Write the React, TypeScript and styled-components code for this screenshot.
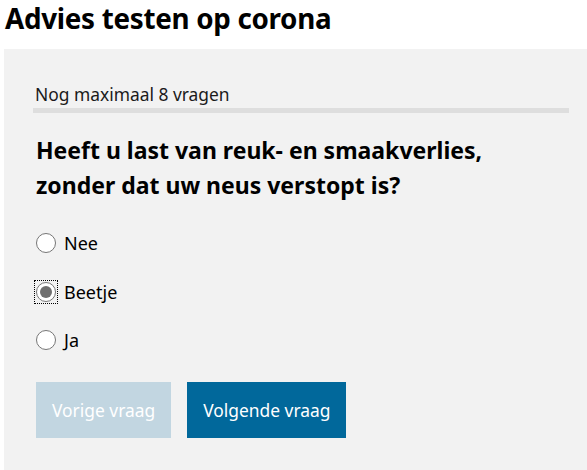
import styled, { createGlobalStyle } from 'styled-components';

const GlobalStyle = createGlobalStyle`
  body {
    margin: 0;
    overflow: hidden;
    background: #ffffff;
    font-family: 'Noto Sans', 'Open Sans', sans-serif;
    color: #000000;
  }
`;

const Page = styled.div`
  padding-left: 4px;
`;

const Title = styled.h1`
  margin: 0;
  padding: 1px 0 0 1px;
  height: 48px;
  font-size: 27.8px;
  line-height: 34px;
  font-weight: bold;
  letter-spacing: -0.3px;
`;

const Panel = styled.div`
  background: #f2f2f2;
  width: 536px;
  padding: 34px 29px 40px 29px;
  min-height: 400px;
`;

const ProgressLabel = styled.div`
  padding-left: 2px;
  font-size: 17.4px;
  line-height: 22px;
  color: #1a1a1a;
`;

const ProgressTrack = styled.div`
  height: 5px;
  margin-top: 3px;
  background: #dedede;
`;

const Question = styled.h2`
  margin: 20px 0 29px 3px;
  font-size: 23px;
  line-height: 35px;
  font-weight: bold;
`;

const Options = styled.div`
  display: flex;
  flex-direction: column;
  gap: 26.5px;
  margin-left: 3px;
`;

const Option = styled.label`
  display: flex;
  align-items: center;
  gap: 8px;
  font-size: 18px;
  line-height: 22px;
  cursor: pointer;
`;

const RadioFocus = styled.span<{ $focused?: boolean }>`
  display: flex;
  padding: 1px;
  margin: -1px;
  outline: ${(p) => (p.$focused ? '1.5px dotted #000' : 'none')};
`;

const Radio = styled.span<{ $checked?: boolean }>`
  position: relative;
  width: 20px;
  height: 20px;
  box-sizing: border-box;
  border-radius: 50%;
  border: 1px solid #767676;
  background: #ffffff;

  &::after {
    content: '';
    display: ${(p) => (p.$checked ? 'block' : 'none')};
    position: absolute;
    left: 3px;
    top: 3px;
    width: 12px;
    height: 12px;
    border-radius: 50%;
    background: #6f6f6f;
  }
`;

const Buttons = styled.div`
  display: flex;
  gap: 16px;
  margin: 31px 0 0 3px;
`;

const Button = styled.button<{ $disabled?: boolean }>`
  height: 56px;
  padding: 0 16px;
  border: none;
  font-family: inherit;
  font-size: 17.4px;
  color: #ffffff;
  background: ${(p) => (p.$disabled ? '#c2d6e1' : '#01689b')};
  cursor: ${(p) => (p.$disabled ? 'default' : 'pointer')};
`;

const options = ['Nee', 'Beetje', 'Ja'];

const App = () => {
  const selected = 'Beetje';
  return (
    <Page>
      <GlobalStyle />
      <Title>Advies testen op corona</Title>
      <Panel>
        <ProgressLabel>Nog maximaal 8 vragen</ProgressLabel>
        <ProgressTrack />
        <Question>
          Heeft u last van reuk- en smaakverlies,
          <br />
          zonder dat uw neus verstopt is?
        </Question>
        <Options>
          {options.map((o) => (
            <Option key={o}>
              <RadioFocus $focused={o === selected}>
                <Radio $checked={o === selected} />
              </RadioFocus>
              {o}
            </Option>
          ))}
        </Options>
        <Buttons>
          <Button $disabled>Vorige vraag</Button>
          <Button>Volgende vraag</Button>
        </Buttons>
      </Panel>
    </Page>
  );
};

export default App;
